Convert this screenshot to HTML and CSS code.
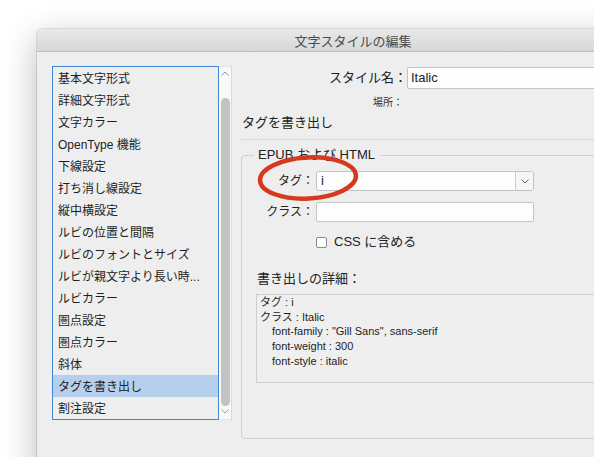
FILE: index.html
```html
<!DOCTYPE html>
<html lang="ja">
<head>
<meta charset="utf-8">
<title>文字スタイルの編集</title>
<link rel="stylesheet" href="styles.css">
</head>
<body>
<div class="window">
  <div class="titlebar">文字スタイルの編集</div>
  <div class="content">
    <div class="sidebar">
      <ul class="list">
        <li>基本文字形式</li>
        <li>詳細文字形式</li>
        <li>文字カラー</li>
        <li>OpenType 機能</li>
        <li>下線設定</li>
        <li>打ち消し線設定</li>
        <li>縦中横設定</li>
        <li>ルビの位置と間隔</li>
        <li>ルビのフォントとサイズ</li>
        <li>ルビが親文字より長い時...</li>
        <li>ルビカラー</li>
        <li>圏点設定</li>
        <li>圏点カラー</li>
        <li>斜体</li>
        <li class="selected">タグを書き出し</li>
        <li>割注設定</li>
      </ul>
      <div class="scrollbar">
        <svg class="chev chev-up" width="8" height="5" viewBox="0 0 8 5"><polyline points="0.5,4.5 4,1 7.5,4.5" fill="none" stroke="#9c9c9c" stroke-width="1"/></svg>
        <div class="thumb"></div>
        <svg class="chev chev-down" width="8" height="5" viewBox="0 0 8 5"><polyline points="0.5,0.5 4,4 7.5,0.5" fill="none" stroke="#9c9c9c" stroke-width="1"/></svg>
      </div>
    </div>
    <div class="main">
      <div class="name-row">
        <span class="name-label">スタイル名：</span>
        <div class="text-input name-input">Italic</div>
      </div>
      <div class="place-row">場所：</div>
      <div class="section-title">タグを書き出し</div>
      <div class="rule"></div>
      <fieldset class="panel">
        <legend>EPUB および HTML</legend>
        <div class="row">
          <span class="lbl">タグ：</span>
          <div class="select">
            <span class="select-value">i</span>
            <span class="select-arrow"><svg width="8" height="5" viewBox="0 0 8 5"><polyline points="0.5,0.5 4,4 7.5,0.5" fill="none" stroke="#666" stroke-width="1"/></svg></span>
          </div>
        </div>
        <div class="row row-class">
          <span class="lbl">クラス：</span>
          <div class="text-input class-input"></div>
        </div>
        <div class="check-row">
          <span class="checkbox"></span>
          <span class="check-text">CSS に含める</span>
        </div>
        <div class="details-title">書き出しの詳細：</div>
        <div class="details">
          <div>タグ : i</div>
          <div>クラス : Italic</div>
          <div class="indent">font-family : "Gill Sans", sans-serif</div>
          <div class="indent">font-weight : 300</div>
          <div class="indent">font-style : italic</div>
        </div>
      </fieldset>
    </div>
  </div>
  <svg class="annotation" width="112" height="56" viewBox="0 0 112 56">
    <ellipse cx="56" cy="28" rx="48" ry="20.5" transform="rotate(-3 56 28)" fill="none" stroke="#d63a1e" stroke-width="4.5"/>
  </svg>
</div>
</body>
</html>
```
FILE: styles.css
```css
* { box-sizing: border-box; }
html, body { margin: 0; padding: 0; }
body {
  width: 594px;
  height: 457px;
  overflow: hidden;
  background: #ffffff;
  font-family: "Liberation Sans", "Noto Sans CJK JP", sans-serif;
  color: #222;
}
.window {
  position: relative;
  margin: 29px 0 0 37px;
  width: 632px;
  height: 470px;
  background: #eeeeee;
  border-radius: 5px 5px 0 0;
  box-shadow: 0 0 0 1px rgba(0,0,0,0.10), 0 10px 34px rgba(0,0,0,0.28);
}
.titlebar {
  height: 23px;
  border-bottom: 1px solid #bdbdbd;
  background: linear-gradient(#e9e9e9, #d7d7d7);
  border-radius: 5px 5px 0 0;
  text-align: center;
  font-size: 13px;
  line-height: 20px;
  padding-top: 3px;
  color: #4b4b4b;
}
.content {
  display: flex;
  align-items: flex-start;
  padding: 14px 0 0 15px;
}
.sidebar {
  display: flex;
  align-items: flex-start;
  width: 180px;
  flex: none;
}
.list {
  list-style: none;
  margin: 0;
  padding: 0;
  width: 167px;
  border: 1px solid #3f87d6;
}
.list li {
  height: 22px;
  line-height: 20px;
  padding-top: 2px;
  padding-left: 5px;
  font-size: 12px;
  white-space: nowrap;
  color: #1e1e1e;
}
.list li.selected { background: #b6cfec; }
.scrollbar {
  width: 13px;
  height: 354px;
  background: #f9f9f9;
  border-right: 1px solid #dadada;
  border-top: 1px solid #e4e4e4;
  border-bottom: 1px solid #e4e4e4;
  display: flex;
  flex-direction: column;
  align-items: center;
}
.chev { display: block; flex: none; }
.chev-up { margin-top: 4px; }
.thumb {
  width: 9px;
  height: 308px;
  margin-top: 22px;
  background: #c3c3c3;
  border-radius: 4.5px;
}
.chev-down { margin-top: 3px; }
.main {
  flex: 1;
  margin-left: 9px;
  padding-right: 15px;
  min-width: 0;
}
.name-row {
  display: flex;
  margin-top: 1px;
  height: 22px;
}
.name-label {
  width: 166px;
  flex: none;
  text-align: right;
  font-size: 13px;
  line-height: 22px;
}
.text-input {
  background: #fdfdfd;
  border: 1px solid #c4c4c4;
  border-radius: 2px;
}
.name-input {
  flex: 1;
  font-size: 13px;
  line-height: 20px;
  padding-left: 3px;
}
.place-row {
  width: 162px;
  margin-top: 7px;
  text-align: right;
  font-size: 10px;
  line-height: 14px;
  color: #333;
}
.section-title {
  margin-top: 4px;
  padding-left: 1px;
  font-size: 13px;
  line-height: 18px;
}
.rule {
  margin-top: 7px;
  height: 1px;
  background: #d6d6d6;
}
.panel {
  margin: 7px 0 0 0;
  padding: 8px 0 55px 0;
  border: 1px solid #d0d0d0;
  border-radius: 4px;
  min-width: 0;
}
.panel legend {
  margin-left: 12px;
  padding: 0 6px 0 4px;
  font-size: 13px;
  line-height: 16px;
}
.row {
  display: flex;
  align-items: center;
  height: 20px;
}
.row-class { margin-top: 11px; }
.lbl {
  width: 72px;
  flex: none;
  text-align: right;
  font-size: 12px;
  line-height: 20px;
}
.select {
  display: flex;
  width: 218px;
  height: 20px;
  margin-left: 2px;
  background: #fdfdfd;
  border: 1px solid #c2c2c2;
  border-radius: 3px;
}
.select-value {
  flex: 1;
  font-size: 13px;
  line-height: 18px;
  padding-left: 4px;
}
.select-arrow {
  width: 18px;
  border-left: 1px solid #cdcdcd;
  background: #f6f6f6;
  border-radius: 0 3px 3px 0;
  display: flex;
  align-items: center;
  justify-content: center;
}
.select-arrow svg { display: block; }
.class-input {
  width: 218px;
  height: 20px;
  margin-left: 2px;
}
.check-row {
  display: flex;
  align-items: center;
  margin-top: 13px;
  height: 14px;
  padding-left: 74px;
}
.checkbox {
  width: 11px;
  height: 11px;
  border: 1px solid #8c8c8c;
  border-radius: 2px;
  background: #fff;
  flex: none;
}
.check-text {
  margin-left: 7px;
  font-size: 13px;
  line-height: 14px;
}
.details-title {
  margin-top: 21px;
  padding-left: 15px;
  font-size: 13px;
  line-height: 18px;
}
.details {
  margin: 6px 14px 0 14px;
  height: 89px;
  border: 1px solid #cfcfcf;
  background: #efefef;
  padding: 0 0 0 3px;
  font-size: 11px;
  line-height: 14.7px;
  color: #1e1e1e;
}
.details .indent { padding-left: 12px; }
.annotation {
  position: absolute;
  left: 215px;
  top: 121px;
}
```
